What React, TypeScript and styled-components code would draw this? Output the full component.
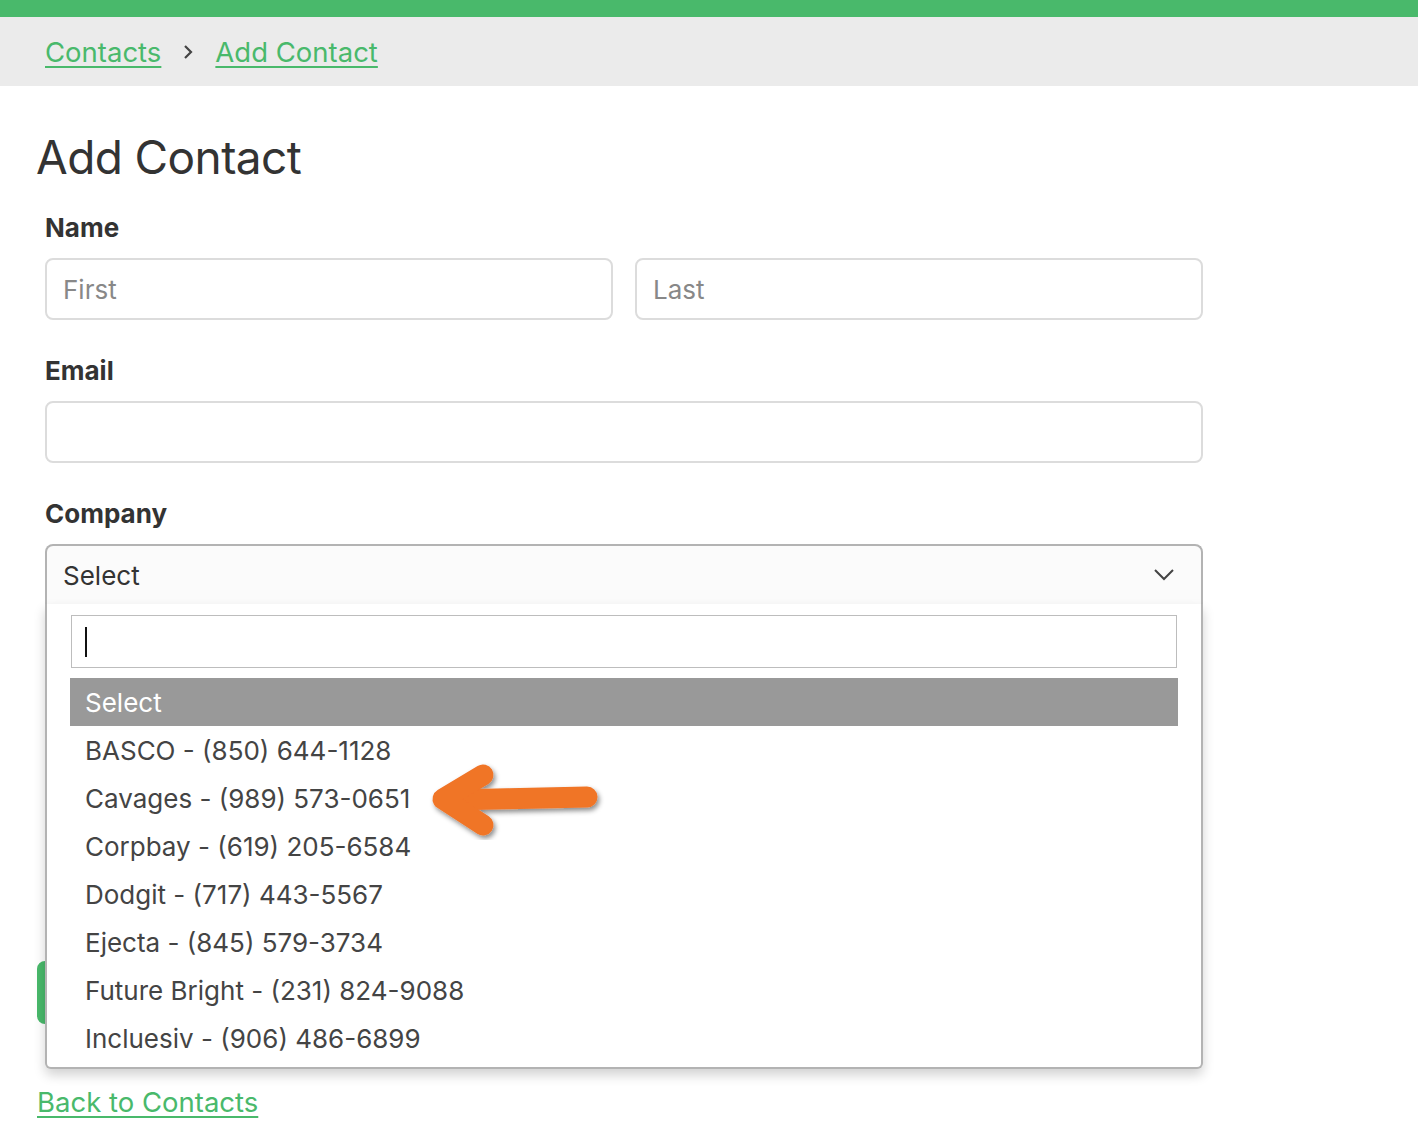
import React, { useState } from 'react'
import styled, { createGlobalStyle } from 'styled-components'

const GlobalStyle = createGlobalStyle`
  html, body {
    margin: 0;
    padding: 0;
    background: #fff;
    font-family: Inter, "Noto Sans", "Liberation Sans", sans-serif;
    color: #333;
  }
`

const green = '#49b96b'

const TopBar = styled.div`
  height: 17px;
  background: ${green};
`

const Breadcrumbs = styled.nav`
  height: 69px;
  background: #ebebeb;
  display: flex;
  align-items: center;
  padding-left: 45px;
  gap: 22px;
  font-size: 27.5px;
`

const Crumb = styled.a`
  color: ${green};
  text-decoration: underline;
  text-underline-offset: 4px;
  text-decoration-thickness: 2px;
  cursor: pointer;
`

const Sep = styled.span`
  display: flex;
  align-items: center;
  color: #444;
`

const Main = styled.main`
  padding: 0 37px 40px;
  width: 1166px;
`

const Title = styled.h1`
  margin: 42px 0 26px -1px;
  font-size: 46px;
  font-weight: 400;
  line-height: 58px;
  color: #333;
  letter-spacing: -0.6px;
`

const Field = styled.div`
  padding-left: 8px;
  margin-bottom: 35px;
`

const Label = styled.label`
  display: block;
  font-size: 26px;
  font-weight: 700;
  line-height: 32px;
  margin-bottom: 14px;
  color: #333;
`

const Row = styled.div`
  display: grid;
  grid-template-columns: 1fr 1fr;
  gap: 22px;
`

const Input = styled.input`
  box-sizing: border-box;
  width: 100%;
  height: 62px;
  border: 2px solid #dcdcdc;
  border-radius: 8px;
  padding: 0 16px;
  font: inherit;
  font-size: 26px;
  color: #333;
  outline: none;
  &::placeholder {
    color: #888;
  }
`

const SelectWrap = styled.div`
  position: relative;
  height: 60px;
`

const SelectBox = styled.div`
  box-sizing: border-box;
  height: 60px;
  border: 2px solid #b3b3b3;
  border-bottom: none;
  border-radius: 8px 8px 0 0;
  background: #fbfbfb;
  display: flex;
  align-items: center;
  justify-content: space-between;
  padding: 0 26px 0 16px;
  font-size: 26px;
  color: #333;
`

const Dropdown = styled.div`
  position: absolute;
  top: 60px;
  left: 0;
  right: 0;
  box-sizing: border-box;
  background: #fff;
  border: 2px solid #b3b3b3;
  border-top: none;
  border-radius: 0 0 6px 6px;
  box-shadow: 0 6px 12px rgba(0, 0, 0, 0.18);
  padding: 11px 23px 5px 23px;
  z-index: 5;
`

const Search = styled.div`
  height: 53px;
  box-sizing: border-box;
  border: 1px solid #bdbdbd;
  margin: 0 1px 10px 1px;
  display: flex;
  align-items: center;
  padding-left: 13px;
`

const Caret = styled.span`
  width: 2px;
  height: 30px;
  background: #111;
`

const Option = styled.div<{ $active?: boolean }>`
  height: 48px;
  display: flex;
  align-items: center;
  padding-left: 15px;
  font-size: 26px;
  color: ${(p) => (p.$active ? '#fff' : '#444')};
  background: ${(p) => (p.$active ? '#999' : 'transparent')};
`

const Filler = styled.div`
  height: 322px;
`

const SubmitButton = styled.button`
  height: 63px;
  width: 220px;
  border: none;
  border-radius: 8px;
  background: ${green};
`

const BackLink = styled.a`
  display: inline-block;
  margin-top: 58px;
  color: ${green};
  font-size: 27.5px;
  text-decoration: underline;
  text-underline-offset: 4px;
  text-decoration-thickness: 2px;
  cursor: pointer;
`

const Arrow = styled.svg`
  position: absolute;
  left: 0;
  top: 0;
  pointer-events: none;
  z-index: 10;
`

const companies = [
  'BASCO - (850) 644-1128',
  'Cavages - (989) 573-0651',
  'Corpbay - (619) 205-6584',
  'Dodgit - (717) 443-5567',
  'Ejecta - (845) 579-3734',
  'Future Bright - (231) 824-9088',
  'Incluesiv - (906) 486-6899',
]

export default function App() {
  const [first, setFirst] = useState('')
  const [last, setLast] = useState('')
  const [email, setEmail] = useState('')

  return (
    <>
      <GlobalStyle />
      <TopBar />
      <Breadcrumbs>
        <Crumb>Contacts</Crumb>
        <Sep>
          <svg width="10" height="16" viewBox="0 0 10 16">
            <path d="M2 2 L8 8 L2 14" fill="none" stroke="#444" strokeWidth="2.2" />
          </svg>
        </Sep>
        <Crumb>Add Contact</Crumb>
      </Breadcrumbs>
      <Main>
        <Title>Add Contact</Title>
        <Field>
          <Label>Name</Label>
          <Row>
            <Input placeholder="First" value={first} onChange={(e) => setFirst(e.target.value)} />
            <Input placeholder="Last" value={last} onChange={(e) => setLast(e.target.value)} />
          </Row>
        </Field>
        <Field>
          <Label>Email</Label>
          <Input value={email} onChange={(e) => setEmail(e.target.value)} />
        </Field>
        <Field>
          <Label>Company</Label>
          <SelectWrap>
            <SelectBox>
              <span>Select</span>
              <svg width="22" height="14" viewBox="0 0 22 14">
                <path d="M2 2 L11 11 L20 2" fill="none" stroke="#444" strokeWidth="2" />
              </svg>
            </SelectBox>
            <Dropdown>
              <Search>
                <Caret />
              </Search>
              <Option $active>Select</Option>
              {companies.map((c) => (
                <Option key={c}>{c}</Option>
              ))}
            </Dropdown>
          </SelectWrap>
          <Filler />
        </Field>
        <SubmitButton aria-label="Save" />
        <div>
          <BackLink>Back to Contacts</BackLink>
        </div>
      </Main>
      <Arrow width="1418" height="1144" viewBox="0 0 1418 1144">
        <defs>
          <filter id="sh" x="-20%" y="-30%" width="140%" height="160%">
            <feDropShadow dx="2" dy="3" stdDeviation="2.5" floodColor="#000" floodOpacity="0.45" />
          </filter>
        </defs>
        <g filter="url(#sh)" fill="none" stroke="#f07427" strokeWidth="21" strokeLinecap="round" strokeLinejoin="round">
          <path d="M587 797 L452 800" />
          <path d="M483 775 L443 799 L483 825" />
        </g>
      </Arrow>
    </>
  )
}
